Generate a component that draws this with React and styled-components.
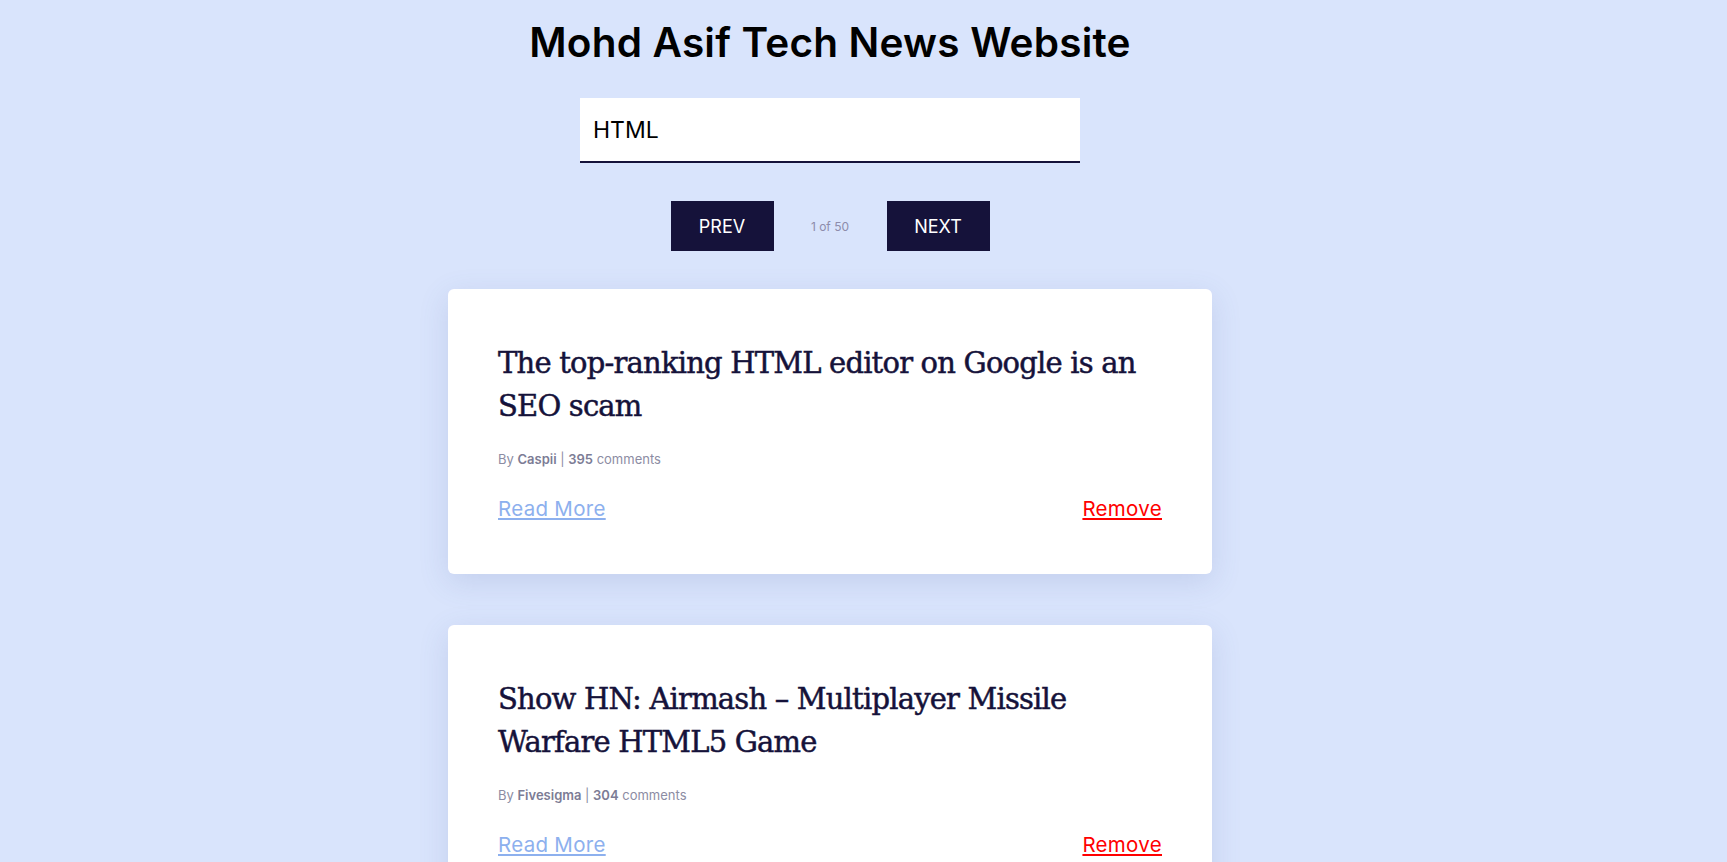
import React, { useState } from "react";
import styled, { createGlobalStyle } from "styled-components";

const stories = [
  {
    id: 1,
    title: "The top-ranking HTML editor on Google is an SEO scam",
    author: "Caspii",
    comments: 395,
  },
  {
    id: 2,
    title: "Show HN: Airmash – Multiplayer Missile Warfare HTML5 Game",
    author: "Fivesigma",
    comments: 304,
  },
];

export default function App() {
  const [query, setQuery] = useState("HTML");

  return (
    <>
      <GlobalStyle />
      <Page>
        <Heading>Mohd Asif Tech News Website</Heading>
        <SearchInput
          type="text"
          value={query}
          onChange={(e) => setQuery(e.target.value)}
        />
        <Pager>
          <PageButton>PREV</PageButton>
          <PageCount>1 of 50</PageCount>
          <PageButton>NEXT</PageButton>
        </Pager>
        <CardList>
          {stories.map((story) => (
            <Card key={story.id}>
              <CardTitle>{story.title}</CardTitle>
              <Meta>
                By <strong>{story.author}</strong> | <strong>{story.comments}</strong> comments
              </Meta>
              <CardActions>
                <ActionLink href="#" $tone="read">
                  Read More
                </ActionLink>
                <ActionLink href="#" $tone="remove">
                  Remove
                </ActionLink>
              </CardActions>
            </Card>
          ))}
        </CardList>
      </Page>
    </>
  );
}

const GlobalStyle = createGlobalStyle`
  html, body {
    margin: 0;
    background: #d9e4fc;
    overflow: hidden;
  }
  body {
    font-family: "Inter", "Noto Sans", sans-serif;
  }
  * {
    box-sizing: border-box;
  }
`;

const Page = styled.div`
  display: flex;
  flex-direction: column;
  align-items: center;
  padding: 18px 67px 0 0;
`;

const Heading = styled.h1`
  margin: 0;
  font-size: 40.5px;
  line-height: 50px;
  font-weight: 600;
  color: #000;
  letter-spacing: 0.2px;
`;

const SearchInput = styled.input`
  margin-top: 30px;
  width: 500px;
  height: 65px;
  padding: 0 13px;
  border: none;
  border-bottom: 2px solid #15123a;
  background: #fff;
  font-family: "Inter", sans-serif;
  font-size: 23px;
  color: #000;
  outline: none;
`;

const Pager = styled.div`
  margin-top: 38px;
  display: flex;
  align-items: center;
`;

const PageButton = styled.button`
  width: 103px;
  height: 50px;
  border: none;
  background: #15123a;
  color: #fff;
  font-family: "Inter", sans-serif;
  font-size: 18px;
  cursor: pointer;
`;

const PageCount = styled.span`
  width: 113px;
  text-align: center;
  font-size: 12px;
  color: #8d8cab;
`;

const CardList = styled.div`
  margin-top: 38px;
  display: flex;
  flex-direction: column;
  gap: 51px;
`;

const Card = styled.article`
  width: 764px;
  padding: 50px 50px 51px;
  background: #fff;
  border-radius: 6px;
  box-shadow: 0 8px 30px rgba(80, 100, 160, 0.16);
`;

const CardTitle = styled.h2`
  margin: 3px 0 0;
  font-family: "DejaVu Serif", serif;
  font-size: 29px;
  line-height: 43px;
  font-weight: 500;
  letter-spacing: -0.8px;
  -webkit-text-stroke: 0.5px #15123a;
  color: #15123a;
`;

const Meta = styled.p`
  margin: 21px 0 0;
  font-size: 13px;
  line-height: 20px;
  color: #8c8ca3;

  strong {
    font-weight: 600;
    color: #7c7c95;
  }
`;

const CardActions = styled.div`
  margin-top: 26px;
  display: flex;
  justify-content: space-between;
  align-items: center;
  line-height: 28px;
`;

const ActionLink = styled.a`
  font-size: 20.5px;
  letter-spacing: 0.3px;
  color: ${(p) => (p.$tone === "remove" ? "#ff0000" : "#8db0ee")};
  text-decoration: underline;
`;
